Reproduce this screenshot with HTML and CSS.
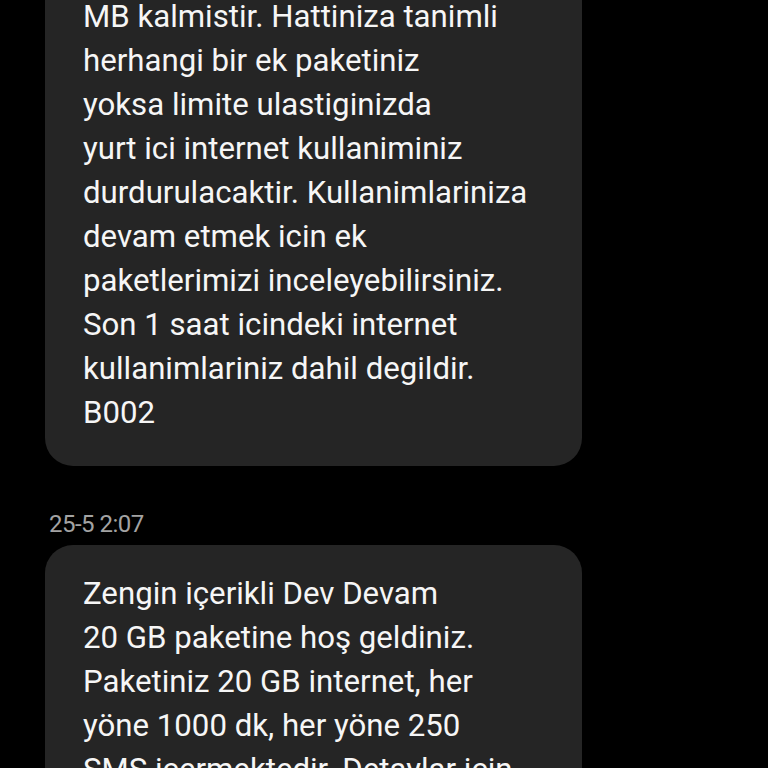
FILE: index.html
```html
<!DOCTYPE html>
<html lang="tr">
<head>
<meta charset="utf-8">
<link rel="stylesheet" href="styles.css">
</head>
<body>
<main class="thread">
  <div class="bubble bubble-first">
    <p class="msg">MB kalmistir. Hattiniza tanimli<br>herhangi bir ek paketiniz<br>yoksa limite ulastiginizda<br>yurt ici internet kullaniminiz<br>durdurulacaktir. Kullanimlariniza<br>devam etmek icin ek<br>paketlerimizi inceleyebilirsiniz.<br>Son 1 saat icindeki internet<br>kullanimlariniz dahil degildir.<br>B002</p>
  </div>
  <div class="stamp">25-5 2:07</div>
  <div class="bubble">
    <p class="msg">Zengin içerikli Dev Devam<br>20 GB paketine hoş geldiniz.<br>Paketiniz 20 GB internet, her<br>yöne 1000 dk, her yöne 250<br>SMS içermektedir. Detaylar için</p>
  </div>
</main>
</body>
</html>
```
FILE: styles.css
```css
html, body {
  margin: 0;
  padding: 0;
  background: #000;
  height: 768px;
  overflow: hidden;
}
.thread {
  display: flex;
  flex-direction: column;
  align-items: flex-start;
  padding-left: 45px;
  font-family: Roboto, "Noto Sans", sans-serif;
}
.bubble {
  width: 537px;
  box-sizing: border-box;
  background: #252525;
  border-radius: 28px;
  padding: 27px 20px 31px 38px;
}
.bubble-first {
  margin-top: -32px;
}
.msg {
  margin: 0;
  color: #f6f6f6;
  font-size: 31.2px;
  line-height: 44px;
  white-space: nowrap;
}
.stamp {
  margin: 46px 0 9px 4px;
  color: #a3a3a3;
  font-size: 24px;
  line-height: 24px;
  letter-spacing: -0.5px;
}
```
